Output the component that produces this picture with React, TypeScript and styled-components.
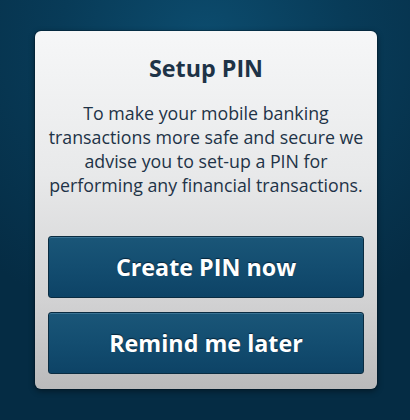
import React from "react";
import styled, { createGlobalStyle } from "styled-components";

const Global = createGlobalStyle`
  html, body { margin: 0; padding: 0; }
  body {
    width: 410px;
    height: 420px;
    overflow: hidden;
    font-family: "Open Sans", "Liberation Sans", sans-serif;
  }
`;

const Screen = styled.div`
  width: 410px;
  height: 420px;
  box-sizing: border-box;
  padding: 31px 33px 0 35px;
  background: radial-gradient(ellipse 320px 300px at 205px 40px, #0c4c6e 0%, #083b58 45%, #052c44 100%);
`;

const Card = styled.div`
  box-sizing: border-box;
  width: 342px;
  height: 358px;
  border-radius: 6px;
  padding: 22px 13px 15px 13px;
  background: linear-gradient(180deg, #f6f7f8 0%, #e8e9ea 40%, #d2d2d3 75%, #bababb 100%);
  box-shadow: 0 0 0 1px rgba(0, 20, 35, 0.35), 0 2px 6px rgba(0, 0, 0, 0.45);
  display: flex;
  flex-direction: column;
  align-items: stretch;
`;

const Title = styled.h1`
  margin: 0;
  text-align: center;
  font-size: 23.3px;
  line-height: 30px;
  font-weight: 700;
  color: #1e3347;
`;

const Body = styled.p`
  margin: 18px 0 0 0;
  text-align: center;
  font-size: 17.8px;
  line-height: 24px;
  font-weight: 400;
  color: #1e3347;
  white-space: nowrap;
`;

const Actions = styled.div`
  margin-top: 39px;
  display: flex;
  flex-direction: column;
  gap: 14px;
`;

const Button = styled.button`
  height: 62px;
  border-radius: 3px;
  border: 1px solid #0a2c41;
  background: linear-gradient(180deg, #1a5678 0%, #134d70 50%, #0d4366 100%);
  box-shadow: inset 0 1px 0 rgba(120, 170, 200, 0.35);
  color: #ffffff;
  font-family: "Open Sans", "Liberation Sans", sans-serif;
  font-size: 23.3px;
  font-weight: 700;
  text-shadow: 0 -1px 1px rgba(0, 20, 35, 0.7);
  cursor: pointer;
  padding: 0;
`;

export default function App() {
  return (
    <>
      <Global />
      <Screen>
        <Card>
          <Title>Setup PIN</Title>
          <Body>
            To make your mobile banking
            <br />
            transactions more safe and secure we
            <br />
            advise you to set-up a PIN for
            <br />
            performing any financial transactions.
          </Body>
          <Actions>
            <Button>Create PIN now</Button>
            <Button>Remind me later</Button>
          </Actions>
        </Card>
      </Screen>
    </>
  );
}
